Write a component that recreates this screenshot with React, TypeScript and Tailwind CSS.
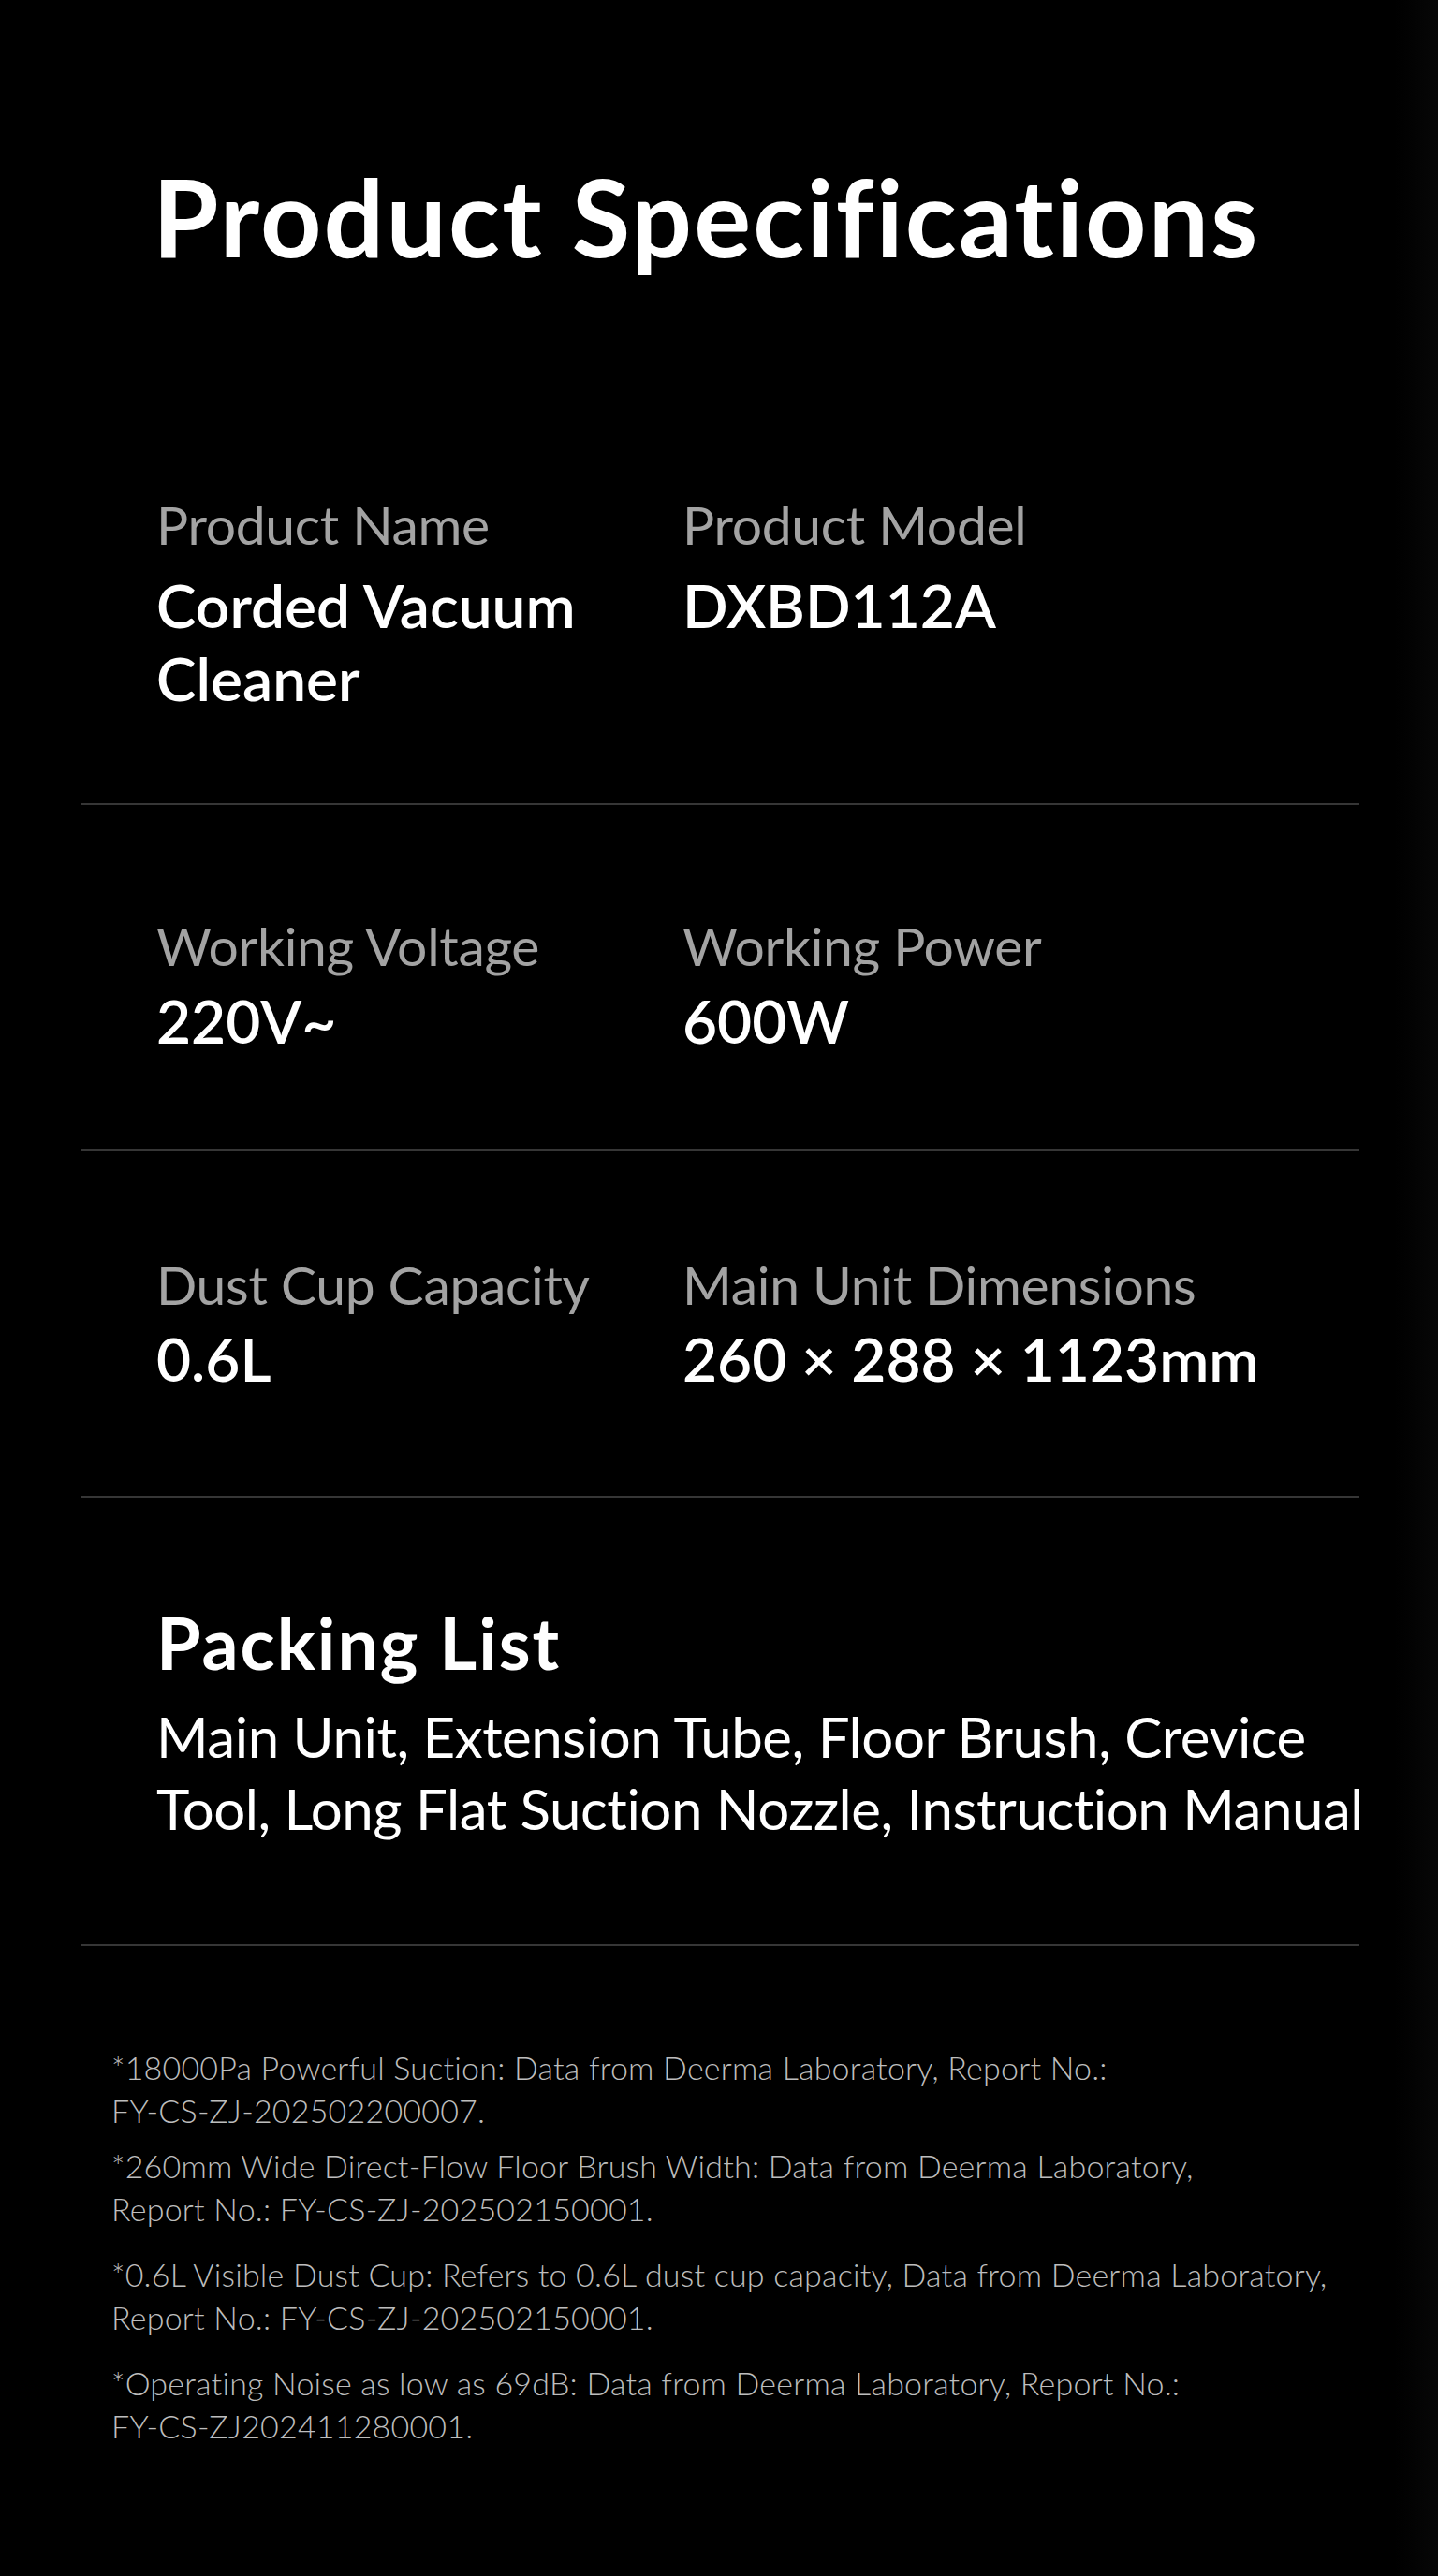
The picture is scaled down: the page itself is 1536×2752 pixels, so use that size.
import React from "react";

type Spec = { label: string; value: string };

const rows: { items: Spec[]; className: string; gap: string }[] = [
  {
    items: [
      { label: "Product Name", value: "Corded Vacuum Cleaner" },
      { label: "Product Model", value: "DXBD112A" },
    ],
    className: "pt-[226px] pb-[94px]",
    gap: "mt-[14px]",
  },
  {
    items: [
      { label: "Working Voltage", value: "220V~" },
      { label: "Working Power", value: "600W" },
    ],
    className: "pt-[116px] pb-[98px]",
    gap: "mt-[7px]",
  },
  {
    items: [
      { label: "Dust Cup Capacity", value: "0.6L" },
      { label: "Main Unit Dimensions", value: "260 × 288 × 1123mm" },
    ],
    className: "pt-[108px] pb-[107px]",
    gap: "mt-[7px]",
  },
];

const notes: { first: string; second: string; gap: string }[] = [
  {
    first: "*18000Pa Powerful Suction: Data from Deerma Laboratory, Report No.:",
    second: "FY-CS-ZJ-202502200007.",
    gap: "",
  },
  {
    first: "*260mm Wide Direct-Flow Floor Brush Width: Data from Deerma Laboratory,",
    second: "Report No.: FY-CS-ZJ-202502150001.",
    gap: "mt-[13px]",
  },
  {
    first: "*0.6L Visible Dust Cup: Refers to 0.6L dust cup capacity, Data from Deerma Laboratory,",
    second: "Report No.: FY-CS-ZJ-202502150001.",
    gap: "mt-[24px]",
  },
  {
    first: "*Operating Noise as low as 69dB: Data from Deerma Laboratory, Report No.:",
    second: "FY-CS-ZJ202411280001.",
    gap: "mt-[24px]",
  },
];

export default function App() {
  return (
    <div className="min-h-screen w-full bg-[linear-gradient(90deg,#000_0%,#000_97%,#070707_100%)] text-white font-['Lato','Liberation_Sans',sans-serif] [font-variant-ligatures:none]">
      <div className="ml-[86px] w-[1366px] pb-[138px]">
        {/* title */}
        <h1 className="pl-[77px] pt-[163px] text-[114px] font-bold leading-[1.2] tracking-[2.2px] whitespace-nowrap">
          Product Specifications
        </h1>

        {/* spec rows */}
        {rows.map((row, i) => (
          <section
            key={i}
            className={`grid grid-cols-[562px_1fr] pl-[81px] border-b-2 border-[#363636] ${row.className}`}
          >
            {row.items.map((item) => (
              <div key={item.label} className="flex flex-col">
                <span className="text-[57px] leading-[1.2] tracking-[-0.3px] text-[#a3a3a3] whitespace-nowrap">
                  {item.label}
                </span>
                <span className={`text-[64px] leading-[78px] font-semibold text-white pr-[60px] ${row.gap}`}>
                  {item.value}
                </span>
              </div>
            ))}
          </section>
        ))}

        {/* packing list */}
        <section className="pl-[81px] pt-[108px] pb-[106px] border-b-2 border-[#363636]">
          <h2 className="text-[77px] font-bold leading-[1.2] tracking-[2px]">Packing List</h2>
          <p className="mt-[17px] text-[60px] leading-[77px] tracking-[-0.45px] whitespace-nowrap">
            Main Unit, Extension Tube, Floor Brush, Crevice
            <br />
            Tool, Long Flat Suction Nozzle, Instruction Manual
          </p>
        </section>

        {/* footnotes */}
        <div className="pl-[33px] pt-[107px] text-[34px] leading-[46px] tracking-[0.2px] font-light text-[#bdbdbd]">
          {notes.map((n, i) => (
            <p key={i} className={`whitespace-nowrap ${n.gap}`}>
              {n.first}
              <br />
              {n.second}
            </p>
          ))}
        </div>
      </div>
    </div>
  );
}
